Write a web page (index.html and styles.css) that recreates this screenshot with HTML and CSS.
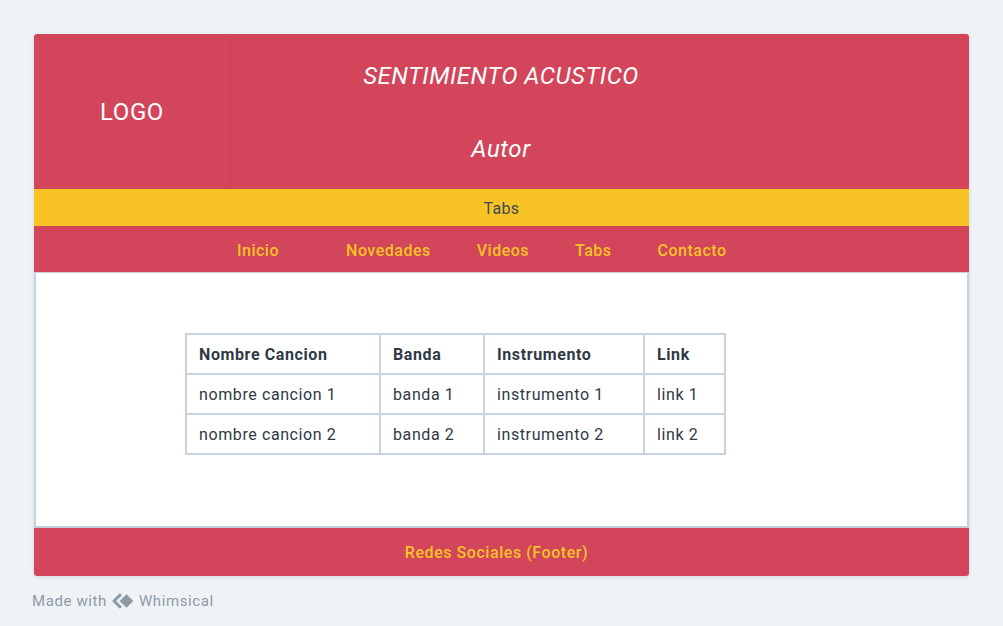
FILE: index.html
```html
<!DOCTYPE html>
<html lang="es">
<head>
<meta charset="utf-8">
<title>Sentimiento Acustico</title>
<link rel="stylesheet" href="styles.css">
</head>
<body>
<div class="page">
  <div class="card">
    <header class="header">
      <div class="logo">LOGO</div>
      <div class="titles">
        <div class="title">SENTIMIENTO ACUSTICO</div>
        <div class="author">Autor</div>
      </div>
    </header>
    <div class="tabs">Tabs</div>
    <nav class="nav">
      <a class="nav-item first">Inicio</a>
      <a class="nav-item">Novedades</a>
      <a class="nav-item">Videos</a>
      <a class="nav-item">Tabs</a>
      <a class="nav-item">Contacto</a>
    </nav>
    <main class="content">
      <table class="songs">
        <thead>
          <tr><th class="c1">Nombre Cancion</th><th class="c2">Banda</th><th class="c3">Instrumento</th><th class="c4">Link</th></tr>
        </thead>
        <tbody>
          <tr><td>nombre cancion 1</td><td>banda 1</td><td>instrumento 1</td><td>link 1</td></tr>
          <tr><td>nombre cancion 2</td><td>banda 2</td><td>instrumento 2</td><td>link 2</td></tr>
        </tbody>
      </table>
    </main>
    <footer class="footer">Redes Sociales (Footer)</footer>
  </div>
  <div class="made"><span>Made with</span>
    <svg class="wlogo" width="24" height="16" viewBox="0 0 24 16">
      <path d="M9 2.2 L3 8 L9 13.8" fill="none" stroke="#8d9aa8" stroke-width="3" stroke-linejoin="round" stroke-linecap="round"/>
      <path d="M15.5 1.2 L22.3 8 L15.5 14.8 L8.7 8 Z" fill="#8d9aa8"/>
    </svg>
    <span>Whimsical</span></div>
</div>
</body>
</html>
```
FILE: styles.css
```css
* { box-sizing: border-box; }
html, body { margin: 0; padding: 0; }
body {
  background: #eff3f6;
  font-family: Roboto, "Noto Sans", sans-serif;
  width: 1003px;
  height: 626px;
  overflow: hidden;
}
.page {
  padding: 34px 34px 0 34px;
}
.card {
  width: 935px;
  border-radius: 3px;
  box-shadow: 0 1px 4px rgba(40, 60, 80, 0.15);
  display: flex;
  flex-direction: column;
}
.header {
  height: 155px;
  background: #d2455a;
  border-radius: 3px 3px 0 0;
  display: flex;
}
.logo {
  width: 197px;
  border-right: 1px solid #c94155;
  display: flex;
  align-items: center;
  justify-content: center;
  color: #fff;
  font-size: 24px;
  letter-spacing: 0.6px;
  padding-top: 0;
}
.titles {
  flex: 1;
  display: flex;
  flex-direction: column;
  align-items: center;
  color: #fff;
  font-style: italic;
  padding-right: 197px;
  margin-left: -1px;
}
.title {
  font-size: 24px;
  letter-spacing: 0.5px;
  margin-top: 27px;
  line-height: 30px;
}
.author {
  font-size: 24px;
  letter-spacing: 0.6px;
  margin-top: 43px;
  line-height: 30px;
}
.tabs {
  height: 37px;
  background: #f7c325;
  color: #3d4852;
  font-size: 16px;
  letter-spacing: 0.3px;
  display: flex;
  align-items: center;
  justify-content: center;
  padding-top: 1px;
}
.nav {
  height: 47px;
  background: #d2455a;
  display: flex;
  align-items: center;
  padding-left: 203px;
  padding-top: 2px;
  gap: 46px;
  border-bottom: 1px solid #c6d0da;
}
.nav-item {
  color: #f7c325;
  font-size: 16px;
  font-weight: 500;
  letter-spacing: 0.5px;
}
.nav-item.first { margin-right: 21px; }
.content {
  height: 255px;
  background: #fff;
  border-left: 2px solid #c8d2dc;
  border-right: 2px solid #c8d2dc;
  border-bottom: 2px solid #c3cdd8;
  padding: 60px 0 0 149px;
}
.songs {
  border-collapse: collapse;
  border: 2px solid #c8d3de;
  color: #2f3a45;
  font-size: 16px;
  letter-spacing: 0.6px;
}
.songs th, .songs td {
  border: 2px solid #c8d3de;
  height: 40px;
  padding: 0 12px;
  text-align: left;
  white-space: nowrap;
}
.songs th { font-weight: 700; }
.c1 { width: 194px; }
.c2 { width: 104px; }
.c3 { width: 160px; }
.c4 { width: 81px; }
.footer {
  height: 48px;
  background: #d2455a;
  border-radius: 0 0 3px 3px;
  color: #f7c325;
  font-size: 16px;
  font-weight: 500;
  letter-spacing: 0.55px;
  display: flex;
  align-items: center;
  justify-content: center;
  padding-right: 10px;
}
.made {
  margin-top: 16px;
  margin-left: -2px;
  color: #8d9aa8;
  font-size: 15px;
  letter-spacing: 0.6px;
  display: flex;
  align-items: center;
  gap: 4px;
}
.wlogo { display: block; }
```
